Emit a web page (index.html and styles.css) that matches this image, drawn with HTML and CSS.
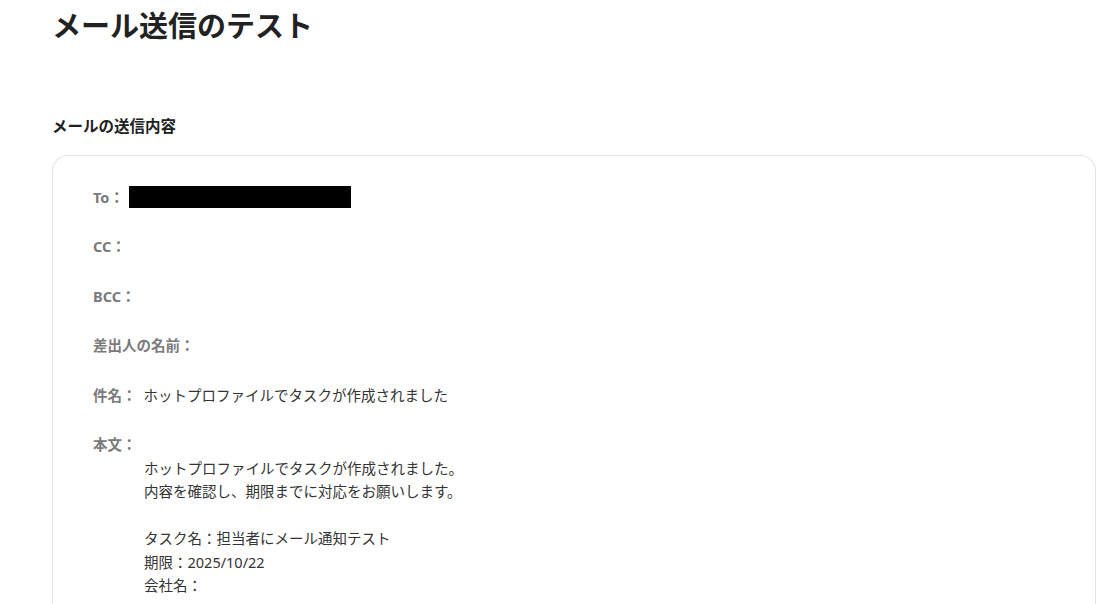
FILE: index.html
```html
<!DOCTYPE html>
<html lang="ja">

<head>
  <meta charset="UTF-8" />
  <meta name="viewport" content="width=device-width, initial-scale=1" />
  <title>メール送信のテスト</title>
  <link rel="stylesheet" href="styles.css">
</head>

<body>
  <div class="page">
    <h1>メール送信のテスト</h1>

    <h2>メールの送信内容</h2>

    <div class="mail-card">
      <div class="row">
        <span class="label">To：</span>
        <span class="redacted"></span>
      </div>
      <div class="row">
        <span class="label">CC：</span>
      </div>
      <div class="row">
        <span class="label">BCC：</span>
      </div>
      <div class="row">
        <span class="label">差出人の名前：</span>
      </div>
      <div class="row">
        <span class="label">件名：</span>
        <span class="value">ホットプロファイルでタスクが作成されました</span>
      </div>
      <div class="row body-row">
        <span class="label">本文：</span>
        <div class="body-text">
          <p>ホットプロファイルでタスクが作成されました。</p>
          <p>内容を確認し、期限までに対応をお願いします。</p>
          <p>&nbsp;</p>
          <p>タスク名：担当者にメール通知テスト</p>
          <p>期限：2025/10/22</p>
          <p>会社名：</p>
        </div>
      </div>
    </div>
  </div>
</body>

</html>
```

FILE: styles.css
```css
* {
  margin: 0;
  padding: 0;
  box-sizing: border-box;
  font-family: 'Noto Sans', 'Noto Sans CJK JP', sans-serif;
}

body {
  background-color: #fff;
  color: #222;
}

.page {
  padding: 6px 21px 0 52px;
}

h1 {
  font-size: 29px;
  font-weight: 700;
  line-height: 40px;
  color: #222;
}

h2 {
  margin-top: 70px;
  font-size: 15.5px;
  font-weight: 700;
  line-height: 20px;
  color: #222;
}

.mail-card {
  margin-top: 19px;
  border: 1px solid #e3e3e3;
  border-bottom: none;
  border-radius: 16px 16px 0 0;
  padding: 29px 40px 0;
  display: flex;
  flex-direction: column;
  gap: 25.4px;
  min-height: 460px;
}

.row {
  display: flex;
  align-items: center;
  height: 24px;
  font-size: 14.5px;
  line-height: 24px;
}

.label {
  color: #7a7a7a;
  font-weight: 700;
}

.value {
  margin-left: 7px;
  color: #333;
}

.redacted {
  display: inline-block;
  width: 222px;
  height: 22px;
  margin-left: 5px;
  background-color: #000;
}

.body-row {
  flex-direction: column;
  align-items: flex-start;
  height: auto;
}

.body-text {
  margin-top: 1px;
  margin-left: 51px;
  color: #333;
  line-height: 23.5px;
}
```
